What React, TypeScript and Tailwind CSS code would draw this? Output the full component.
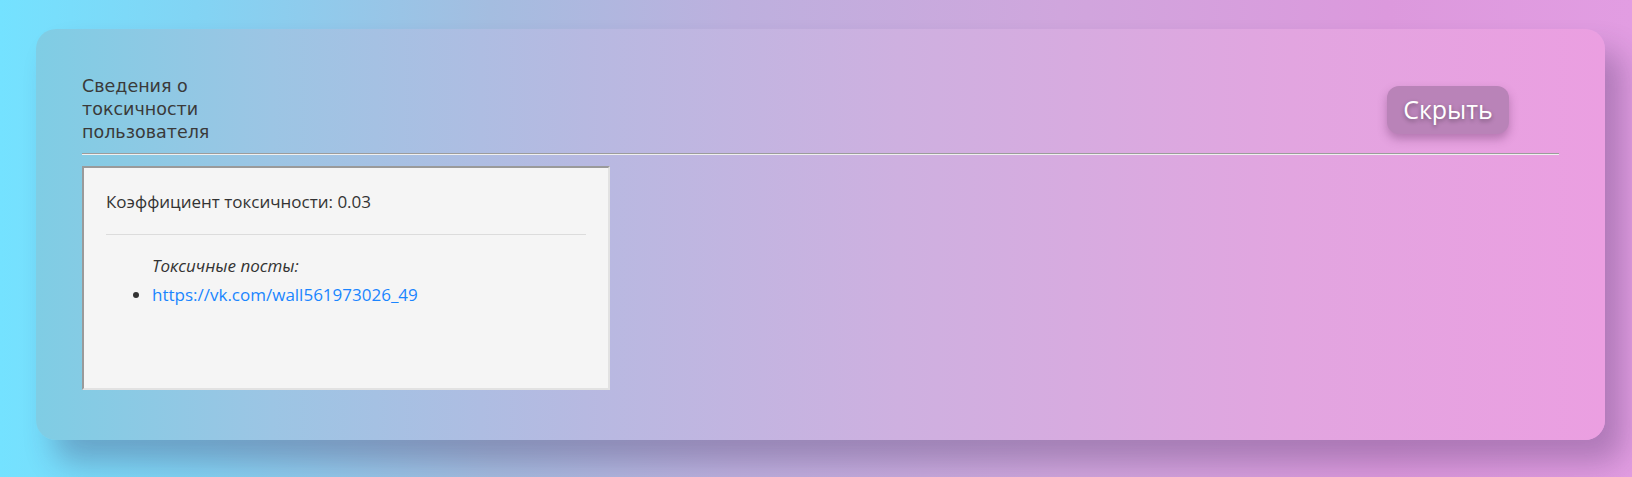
import React from 'react';

const posts = ['https://vk.com/wall561973026_49'];

export default function App() {
  return (
    <div className="h-[477px] w-full overflow-hidden bg-[linear-gradient(90deg,#74e2ff_0%,#82d4f4_12%,#a4bde0_30%,#bdb0de_45%,#d0a6dd_65%,#dc99dd_85%,#e29de2_100%)] pl-[36px] pr-[27px] pt-[29px]">
      <div className="rounded-[20px] bg-[linear-gradient(90deg,#7fcde4_0%,#9cc5e4_15%,#b7b9e1_35%,#ceb0e0_55%,#e2a5e0_80%,#eb9fe1_100%)] px-[46px] pt-[46px] pb-[50px] shadow-[18px_22px_30px_rgba(60,40,90,0.3)]">
        {/* header */}
        <div className="flex items-center justify-between">
          <h3 className="w-[135px] text-[17.5px] leading-[23px] text-[#3a3a3a] font-['DejaVu_Sans',sans-serif] font-normal">
            Сведения о токсичности пользователя
          </h3>
          <button className="mr-[50px] h-[48px] w-[122px] rounded-[12px] bg-[#b983b8] text-[25px] text-white font-['Open_Sans',sans-serif] shadow-[0_5px_10px_rgba(90,40,90,0.35)] [text-shadow:0_2px_4px_rgba(0,0,0,0.35)]">
            Скрыть
          </button>
        </div>
        <hr className="mt-[9px] border-0 border-t border-t-[#9c9c9c] border-b border-b-[#f0f0f0]" />

        {/* details box */}
        <div className="mt-[11px] h-[224px] w-[528px] border-2 border-t-[#9a9a9a] border-l-[#9a9a9a] border-r-[#e2e2e2] border-b-[#e2e2e2] bg-[#f5f5f5] px-[22px] pt-[22px] font-['Open_Sans',sans-serif] text-[#333]">
          <p className="text-[17px] leading-[24px]">Коэффициент токсичности: 0.03</p>
          <hr className="mt-[20px] border-0 border-t border-t-[#dcdcdc]" />
          <ul className="mt-[16px] list-disc pl-[46px] text-[17px] leading-[29px]">
            <i className="block">Токсичные посты:</i>
            {posts.map(p => (
              <li key={p}>
                <a href={p} className="text-[#1a85ff]">{p}</a>
              </li>
            ))}
          </ul>
        </div>
      </div>
    </div>
  );
}
